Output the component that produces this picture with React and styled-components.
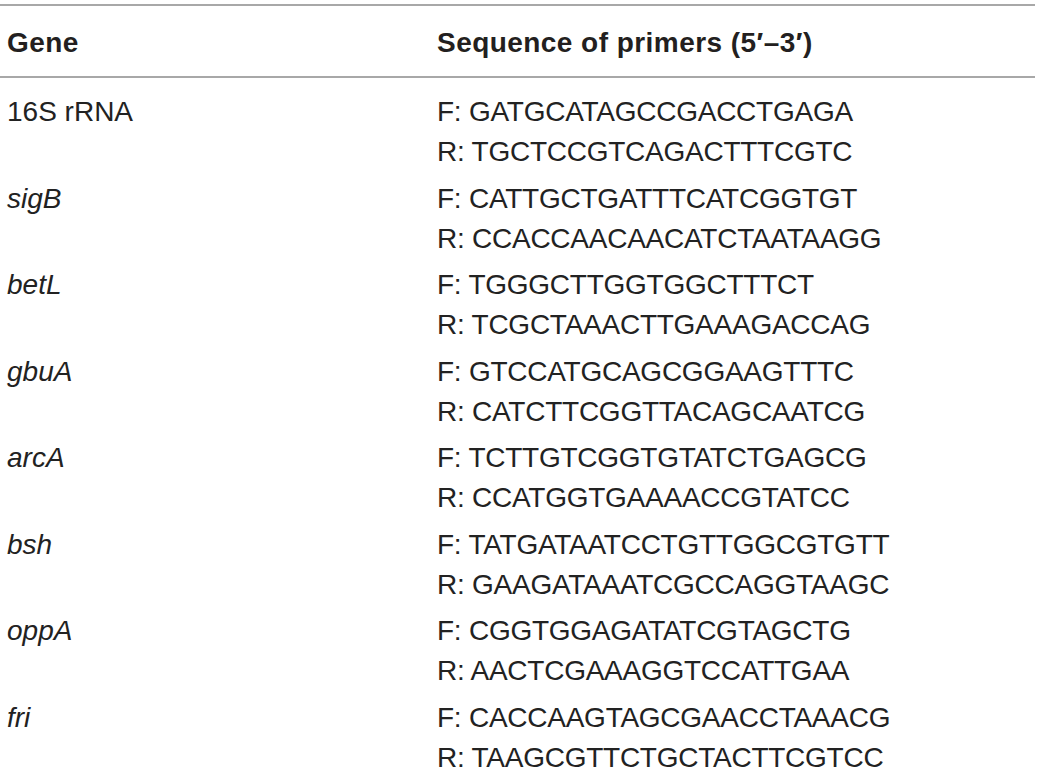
import React from "react";
import styled, { createGlobalStyle } from "styled-components";

const GlobalStyle = createGlobalStyle`
  body {
    margin: 0;
    background: #ffffff;
    font-family: "Liberation Sans", Arial, sans-serif;
    color: #222222;
  }
`;

const Page = styled.div`
  width: 1035px;
  padding-top: 4px;
`;

const HeaderRow = styled.div`
  display: grid;
  grid-template-columns: 430px 1fr;
  border-top: 2px solid #a8a8a8;
  border-bottom: 2px solid #a8a8a8;
  padding: 17px 0 13px;
  line-height: 40px;
  font-size: 28px;
  font-weight: bold;
  letter-spacing: 0.45px;
  color: #231f20;
`;

const Body = styled.div`
  padding-top: 11px;
`;

const Row = styled.div`
  display: grid;
  grid-template-columns: 430px 1fr;
  padding: 3px 0 3.5px;
  line-height: 40px;
  font-size: 28px;
`;

const Cell = styled.div`
  padding-left: 7px;
`;

const GeneName = styled(Cell)`
  font-style: ${(p) => (p.$italic ? "italic" : "normal")};
`;

const Primer = styled.div`
  letter-spacing: -0.25px;
  white-space: nowrap;
`;

const genes = [
  { name: "16S rRNA", italic: false, f: "GATGCATAGCCGACCTGAGA", r: "TGCTCCGTCAGACTTTCGTC" },
  { name: "sigB", italic: true, f: "CATTGCTGATTTCATCGGTGT", r: "CCACCAACAACATCTAATAAGG" },
  { name: "betL", italic: true, f: "TGGGCTTGGTGGCTTTCT", r: "TCGCTAAACTTGAAAGACCAG" },
  { name: "gbuA", italic: true, f: "GTCCATGCAGCGGAAGTTTC", r: "CATCTTCGGTTACAGCAATCG" },
  { name: "arcA", italic: true, f: "TCTTGTCGGTGTATCTGAGCG", r: "CCATGGTGAAAACCGTATCC" },
  { name: "bsh", italic: true, f: "TATGATAATCCTGTTGGCGTGTT", r: "GAAGATAAATCGCCAGGTAAGC" },
  { name: "oppA", italic: true, f: "CGGTGGAGATATCGTAGCTG", r: "AACTCGAAAGGTCCATTGAA" },
  { name: "fri", italic: true, f: "CACCAAGTAGCGAACCTAAACG", r: "TAAGCGTTCTGCTACTTCGTCC" },
];

const App = () => (
  <Page>
    <GlobalStyle />
    <HeaderRow>
      <Cell>Gene</Cell>
      <Cell>Sequence of primers (5′–3′)</Cell>
    </HeaderRow>
    <Body>
      {genes.map((g) => (
        <Row key={g.name}>
          <GeneName $italic={g.italic}>{g.name}</GeneName>
          <Cell>
            <Primer>F: {g.f}</Primer>
            <Primer>R: {g.r}</Primer>
          </Cell>
        </Row>
      ))}
    </Body>
  </Page>
);

export default App;
